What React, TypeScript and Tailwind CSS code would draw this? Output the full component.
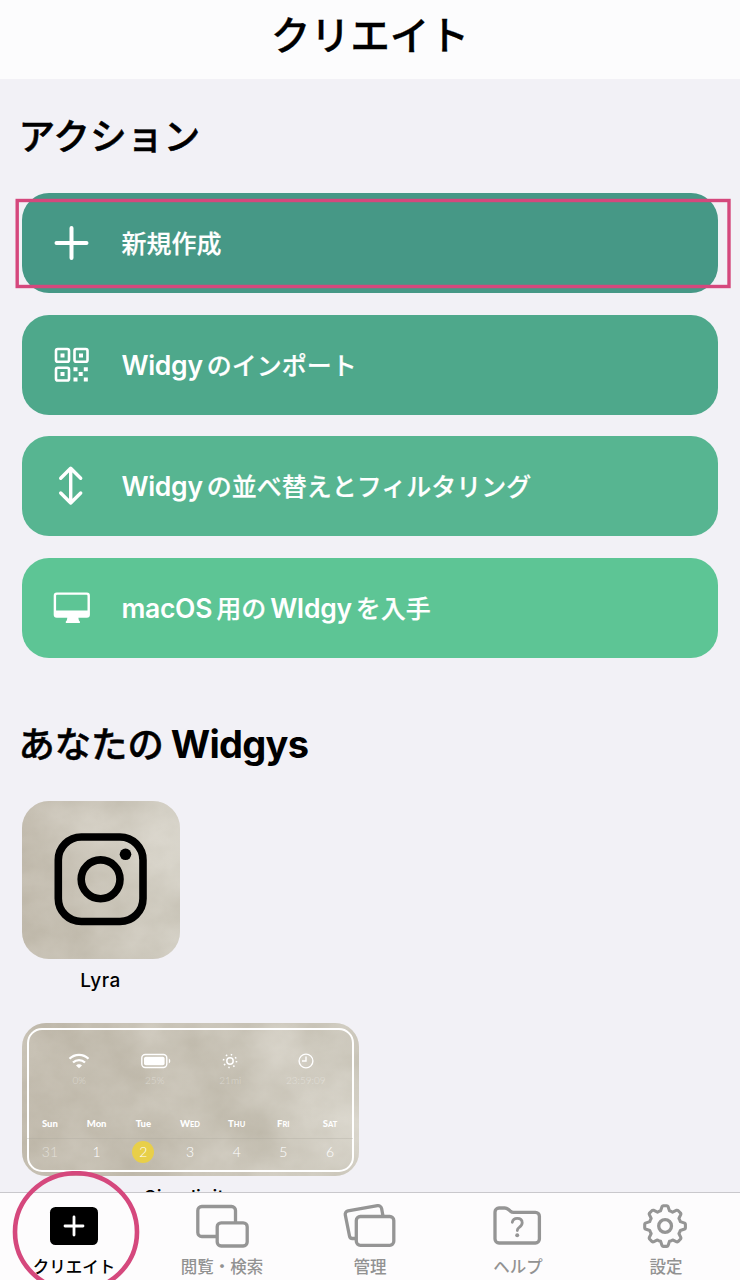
import { clsx } from "clsx"
import React, { ReactNode } from "react"

interface TextPart {
	text: string
	latin?: boolean
}

interface ActionType {
	parts: TextPart[]
	color: string
	icon: ReactNode
	highlighted?: boolean
}

const PlusIcon = () => (
	<svg width="36" height="36" viewBox="0 0 36 36" stroke="white" strokeWidth="4" strokeLinecap="round">
		<path d="M17.500 3v30M2.500 18h30" />
	</svg>
)

const QrIcon = () => (
	<svg width="36" height="36" viewBox="0 0 36 36" fill="white">
		<g fill="none" stroke="white" strokeWidth="2.600">
			<rect x="2" y="2" width="13" height="12.800" rx="1.800" />
			<rect x="20.500" y="2" width="13" height="12.800" rx="1.800" />
			<rect x="2" y="20.700" width="13" height="12.800" rx="1.800" />
		</g>
		<path d="M6.500 6.500h4v4h-4zM25 6.500h4v4h-4zM6.500 25h4v4h-4zM19.500 20.300h4v4h-4zM29.800 20.300h4v4h-4zM24.700 25h4v4h-4zM19.500 30.500h4v4h-4zM29.800 30.500h4v4h-4z" />
	</svg>
)

const ArrowsIcon = () => (
	<svg width="36" height="42" viewBox="0 0 36 42" fill="none" stroke="white" strokeWidth="3.400" strokeLinecap="round" strokeLinejoin="round">
		<path d="M16.700 4v34M6.700 13.300l10-10 10 10M6.700 28l10 10 10-10" />
	</svg>
)

const DesktopIcon = () => (
	<svg width="36" height="36" viewBox="0 0 36 36" fill="white" className="overflow-visible">
		<path
			fillRule="evenodd"
			d="M2.700 2.500h30.200a3 3 0 0 1 3 3v19.200a3 3 0 0 1-3 3h-8.500c.2 2 .6 3.100 1.500 3.800v1.500H11.800v-1.500c.9-.7 1.300-1.800 1.500-3.800H2.700a3 3 0 0 1-3-3V5.500a3 3 0 0 1 3-3zM3 4.800a.9.9 0 0 0-.9.9v14.900h31.400V5.700a.9.9 0 0 0-.9-.9z"
		/>
	</svg>
)

const actions: ActionType[] = [
	{
		parts: [{ text: "新規作成" }],
		color: "bg-[#469886]",
		icon: <PlusIcon />,
		highlighted: true,
	},
	{
		parts: [{ text: "Widgy", latin: true }, { text: "のインポート" }],
		color: "bg-[#4ea88b]",
		icon: <QrIcon />,
	},
	{
		parts: [
			{ text: "Widgy", latin: true },
			{ text: "の並べ替えとフィルタリング" },
		],
		color: "bg-[#57b591]",
		icon: <ArrowsIcon />,
	},
	{
		parts: [
			{ text: "macOS", latin: true },
			{ text: "用の" },
			{ text: "WIdgy", latin: true },
			{ text: "を入手" },
		],
		color: "bg-[#5dc595]",
		icon: <DesktopIcon />,
	},
]

const ActionButton = ({ parts, color, icon, highlighted }: ActionType) => (
	<button
		type="button"
		className={clsx(
			"relative flex h-[100px] w-full items-center rounded-[27px] pl-8 text-white",
			color,
		)}
	>
		<span className="flex w-9 justify-center">{icon}</span>
		<span className="ml-8 mt-px flex items-baseline gap-1 whitespace-nowrap text-[25px] font-medium leading-9">
			{parts.map((part) => (
				<span
					key={part.text}
					className={clsx(
						part.latin
							? "text-[26.500px] font-semibold tracking-[-0.300px]"
							: "[-webkit-text-stroke:0.200px_white]",
					)}
				>
					{part.text}
				</span>
			))}
		</span>
		{highlighted && (
			<svg className="absolute -left-[7px] top-[5px] overflow-visible" width="717" height="91" fill="none">
				<rect x="2.200" y="2.500" width="711.800" height="86" stroke="#d5487d" strokeWidth="3.400" />
			</svg>
		)}
	</button>
)

// stained paper used behind the widgets
const Paper = ({ id, seed }: { id: string; seed: number }) => (
	<svg className="absolute inset-0 h-full w-full">
		<filter id={id} x="0" y="0" width="100%" height="100%" colorInterpolationFilters="sRGB">
			<feTurbulence type="fractalNoise" baseFrequency="0.012 0.014" numOctaves="6" seed={seed} />
			<feColorMatrix values="0.2 0 0 0 0.7  0.21 0 0 0 0.677  0.24 0 0 0 0.615  0 0 0 0 1" />
		</filter>
		<linearGradient id={`${id}-light`}>
			<stop offset="0" stopColor="#a89c8a" stopOpacity="0.28" />
			<stop offset="1" stopColor="#dedbd2" stopOpacity="0.3" />
		</linearGradient>
		<rect width="100%" height="100%" filter={`url(#${id})`} />
		<rect width="100%" height="100%" fill={`url(#${id}-light)`} />
	</svg>
)

const LyraWidget = () => (
	<div className="w-[158px]">
		<div className="relative h-[158px] overflow-hidden rounded-[27px]">
			<Paper id="paper-lyra" seed={8} />
			<svg className="relative" width="158" height="158" viewBox="0 0 158 158" fill="none" stroke="black" strokeWidth="7.600">
				<rect x="36.300" y="36" width="84.700" height="84.500" rx="23" />
				<circle cx="78.600" cy="78.300" r="19.400" />
				<circle cx="103.500" cy="53.300" r="5.800" fill="black" stroke="none" />
			</svg>
		</div>
		<p className="mt-2 text-center text-[19px] font-medium leading-7 tracking-[0.500px]">Lyra</p>
	</div>
)

const days = [
	["Sun", "31"],
	["Mon", "1"],
	["Tue", "2"],
	["Wed", "3"],
	["Thu", "4"],
	["Fri", "5"],
	["Sat", "6"],
]

const WifiIcon = () => (
	<svg width="22" height="18" viewBox="0 0 22 18" fill="none" stroke="white" strokeWidth="2.300">
		<path d="M1.500 6.800c5.200-5.200 13.800-5.200 19 0M5 10.500c3.400-3.200 8.600-3.200 12 0" />
		<path d="M11 16.200l-3-2.700c1.500-1.700 4.500-1.700 6 0z" fill="white" stroke="none" />
	</svg>
)

const BatteryIcon = () => (
	<svg width="32" height="18" viewBox="0 0 32 18">
		<rect x="2.800" y="2.500" width="25" height="13" rx="3.500" fill="none" stroke="white" strokeWidth="1.400" />
		<rect x="5" y="4.700" width="20.600" height="8.600" rx="1.800" fill="white" />
		<path d="M29.800 6.500c2 1 2 4 0 5z" fill="white" />
	</svg>
)

const SunIcon = () => (
	<svg width="18" height="18" viewBox="0 0 18 18" fill="none" stroke="white" strokeWidth="1.500">
		<circle cx="9" cy="9" r="3.200" />
		<circle cx="9" cy="9" r="6.500" strokeWidth="1.600" strokeDasharray="1.500 3.605" />
	</svg>
)

const ClockIcon = () => (
	<svg width="18" height="18" viewBox="0 0 18 18" fill="none" stroke="white" strokeWidth="1.400">
		<circle cx="9" cy="9" r="6.900" />
		<path d="M9 4.500V9H5" />
	</svg>
)

const stats = [
	{ icon: <WifiIcon />, value: "0%" },
	{ icon: <BatteryIcon />, value: "25%" },
	{ icon: <SunIcon />, value: "21mi" },
	{ icon: <ClockIcon />, value: "23:59:09" },
]

const SimplicityWidget = () => (
	<div className="mt-[28px] w-[337px]">
		<div className="relative h-[153px] overflow-hidden rounded-[24px] p-[5px] pb-1">
			<Paper id="paper-simplicity" seed={21} />
			<div className="relative h-full rounded-[15px] border-[2.500px] border-white pt-[22px] text-white">
				<div className="flex justify-center pl-[5px]">
					{stats.map((stat) => (
						<div key={stat.value} className="flex w-[75.500px] flex-col items-center">
							<span className="flex h-[18px] items-center">{stat.icon}</span>
							<span className="mt-1 font-['Lato',sans-serif] text-[10px] font-light leading-3 text-white/40">{stat.value}</span>
						</div>
					))}
				</div>
				<div className="-mx-0.5 mt-[32px] flex justify-center font-['Lato',sans-serif]">
					{days.map(([day, date], key) => (
						<div key={day} className="w-[46.700px] text-center">
							<p
								className={clsx(
									"h-3 font-black leading-3",
									key > 2 ? "text-[7.500px] uppercase first-letter:text-[9.500px]" : "text-[9.500px]",
								)}
							>
								{day}
							</p>
							<div className="mt-[8px] flex h-7 items-center justify-center border-t border-[#aaa49b]/30 text-[14px] font-light leading-4">
								<span
									className={clsx(
										"flex size-[22px] items-center justify-center rounded-full",
										date === "31" && "text-white/50",
										date === "2" && "bg-[#e8cf49]",
									)}
								>
									{date}
								</span>
							</div>
						</div>
					))}
				</div>
			</div>
		</div>
		<p className="mt-2 text-center text-[19px] font-medium leading-7 tracking-[0.300px]">Simplicity</p>
	</div>
)

const CreateIcon = () => (
	<svg width="60" height="48" viewBox="0 0 60 48">
		<rect x="6" y="6" width="48" height="38" rx="5.500" fill="black" />
		<path d="M30 16v18M21 25h18" stroke="white" strokeWidth="2.800" strokeLinecap="round" />
	</svg>
)

const BrowseIcon = () => (
	<svg width="60" height="48" viewBox="0 0 60 48" fill="none" stroke="#959595" strokeWidth="3.300">
		<path d="M25 35.500H9.800a4 4 0 0 1-4-4v-22a4 4 0 0 1 4-4h29.700a4 4 0 0 1 4 4v12.500" />
		<rect x="25.200" y="21.800" width="30" height="23.200" rx="4" />
	</svg>
)

const ManageIcon = () => (
	<svg width="60" height="48" viewBox="0 0 60 48" fill="none" stroke="#959595" strokeWidth="3.300" strokeLinejoin="round">
		<path d="M15.500 37.500h-3a3 3 0 0 1-3-2.500L5.300 14a3.500 3.500 0 0 1 2.700-4.200L37.500 4.700a3.500 3.500 0 0 1 4.100 2.800l1.400 7.500" />
		<rect x="16.300" y="15.500" width="37.500" height="28.800" rx="4" />
	</svg>
)

const HelpIcon = () => (
	<svg width="60" height="48" viewBox="0 0 60 48" fill="none" stroke="#959595" strokeWidth="3.300" strokeLinecap="round">
		<path d="M7 38v-27a4 4 0 0 1 4-4h5.700c1.500 0 2.500.5 3.600 1.400l2 1.700c1 .8 2 1.200 3.300 1.200h21.800a4 4 0 0 1 4 4V38a4 4 0 0 1-4 4H11a4 4 0 0 1-4-4z" />
		<path d="M24.300 21.300c.5-2.500 2.300-3.900 4.900-3.900 3 0 5 1.700 5 4.300 0 2.300-1.300 3.400-3 4.600-1.500 1-1.900 1.700-1.900 3.300" strokeWidth="2.800" />
		<circle cx="29.200" cy="34.300" r="2" fill="#959595" stroke="none" />
	</svg>
)

const GearIcon = () => (
	<svg width="60" height="48" viewBox="0 0 60 48" fill="none" stroke="#959595" strokeWidth="3.300" strokeLinejoin="round">
		<path
			d="M26.800 4.800Q27.200 4 28 4h4Q32.800 4 33.200 4.800L34.800 9.500Q36.600 10 38.200 11L42.600 8.900Q43.400 8.700 44 9.200L46.800 12Q47.300 12.600 47.100 13.400L45 17.800Q46 19.400 46.500 21.200L51.200 22.800Q52 23.200 52 24v4Q52 28.800 51.200 29.200L46.500 30.800Q46 32.600 45 34.200L47.100 38.600Q47.300 39.400 46.800 40L44 42.800Q43.400 43.300 42.600 43.100L38.200 41Q36.600 42 34.800 42.500L33.200 47.200Q32.800 48 32 48h-4Q27.200 48 26.800 47.200L25.200 42.500Q23.400 42 21.800 41L17.400 43.100Q16.600 43.300 16 42.800L13.200 40Q12.700 39.400 12.900 38.600L15 34.200Q14 32.600 13.500 30.800L8.800 29.200Q8 28.800 8 28v-4Q8 23.200 8.800 22.800L13.500 21.200Q14 19.400 15 17.800L12.900 13.400Q12.700 12.600 13.200 12L16 9.200Q16.600 8.700 17.400 8.900L21.800 11Q23.400 10 25.200 9.500Z"
			transform="translate(1.300 1) scale(.925)"
		/>
		<circle cx="29.100" cy="25" r="6.400" />
	</svg>
)

const tabs = [
	{ title: "クリエイト", icon: <CreateIcon />, active: true },
	{ title: "閲覧・検索", icon: <BrowseIcon /> },
	{ title: "管理", icon: <ManageIcon /> },
	{ title: "ヘルプ", icon: <HelpIcon /> },
	{ title: "設定", icon: <GearIcon /> },
]

const TabBar = () => (
	<nav className="relative z-10 flex h-[88px] shrink-0 border-t border-[#c9c8cc] bg-[#fdfcfd]">
		{tabs.map((tab) => (
			<button
				key={tab.title}
				type="button"
				className={clsx(
					"flex w-[148px] flex-col items-center pt-[8px]",
					tab.active ? "text-black" : "text-[#929292]",
				)}
			>
				{tab.icon}
				<span className="mt-[6px] whitespace-nowrap text-[16.500px] font-medium leading-6">{tab.title}</span>
			</button>
		))}
		<svg className="pointer-events-none absolute -top-[22px] left-0" width="150" height="110" viewBox="0 0 150 110">
			<ellipse cx="76" cy="61" rx="61" ry="58.800" fill="none" stroke="#d5487d" strokeWidth="4.600" />
		</svg>
	</nav>
)

const App = () => {
	return (
		<div className="flex h-[1280px] w-[740px] flex-col overflow-hidden bg-[#f2f1f6] font-['Inter','Noto_Sans_CJK_JP',sans-serif] text-black">
			<header className="flex h-[79px] shrink-0 items-center justify-center bg-[#fcfcfd] pb-1.5">
				<h1 className="text-[39.700px] font-medium leading-none [-webkit-text-stroke:0.300px_black]">クリエイト</h1>
			</header>
			<main className="min-h-0 flex-1 overflow-hidden pl-[21.500px] pr-[22px]">
				<h2 className="-ml-[3px] pt-[34px] text-[36.700px] font-medium leading-[48px] [-webkit-text-stroke:0.500px_black]">
					アクション
				</h2>
				<div className="mt-[32px] flex flex-col gap-[21.500px]">
					{actions.map((action) => (
						<ActionButton key={action.color} {...action} />
					))}
				</div>
				<h2 className="-ml-[3px] mt-[62px] flex items-baseline gap-[7px] text-[36.300px] font-medium leading-[48px]">
					<span className="[-webkit-text-stroke:0.500px_black]">あなたの</span>
					<span className="text-[38px] font-bold tracking-[-0.700px]">Widgys</span>
				</h2>
				<div className="mt-[32px]">
					<LyraWidget />
					<SimplicityWidget />
				</div>
			</main>
			<TabBar />
		</div>
	)
}

export default App
